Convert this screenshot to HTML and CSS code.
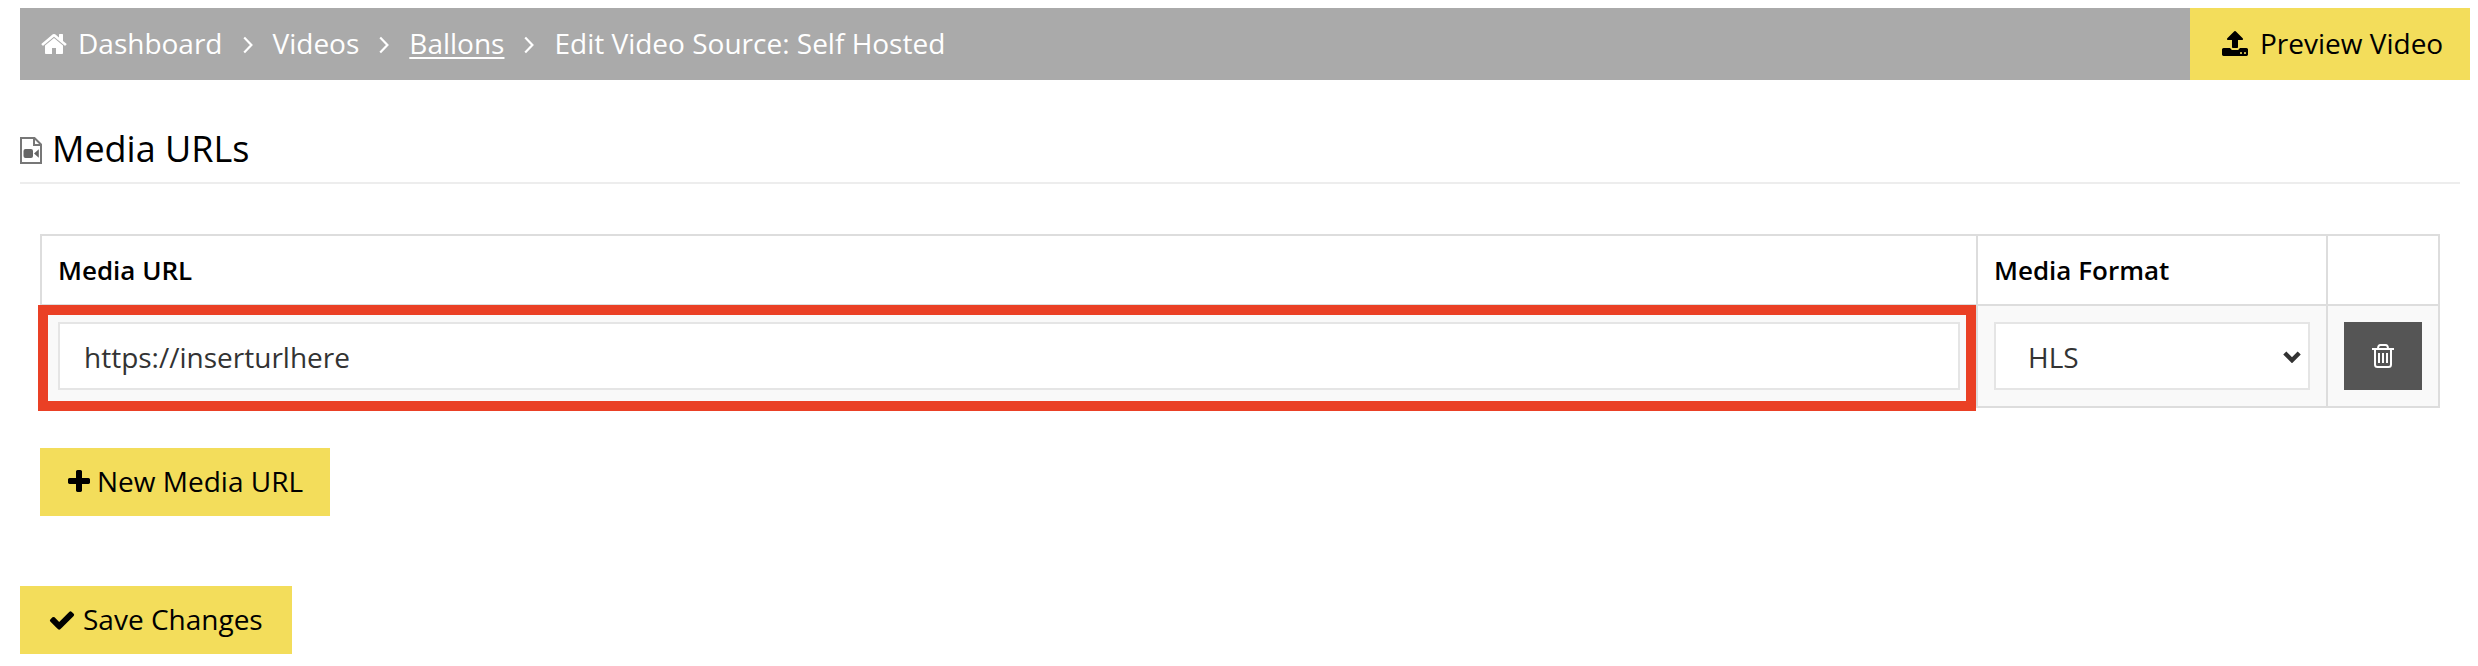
FILE: index.html
```html
<!DOCTYPE html>
<html lang="en">
<head>
    <meta charset="UTF-8">
    <meta name="viewport" content="width=device-width, initial-scale=1.0">
    <title>Edit Video Source: Self Hosted</title>
    <link rel="stylesheet" href="styles.css">
</head>
<body>
    <div id="main">
        <nav class="breadcrumb">
            <div class="crumbs">
                <svg class="icon home" viewBox="0 0 1792 1792"><path d="M1472 992v480q0 26-19 45t-45 19h-384v-384h-256v384h-384q-26 0-45-19t-19-45v-480q0-1 .5-3t.5-3l575-474 575 474q1 2 1 6zm223-69l-62 74q-8 9-21 11h-3q-13 0-21-7l-692-577-692 577q-12 8-24 7-13-2-21-11l-62-74q-8-10-7-23.5t11-21.5l719-599q32-26 76-26t76 26l244 204v-195q0-14 9-23t23-9h192q14 0 23 9t9 23v408l219 182q10 8 11 21.5t-7 23.5z"/></svg>
                <a href="#">Dashboard</a>
                <svg class="chevron" viewBox="0 0 10 18"><path d="M1.2 1.6L8.4 9l-7.2 7.4"/></svg>
                <a href="#">Videos</a>
                <svg class="chevron" viewBox="0 0 10 18"><path d="M1.2 1.6L8.4 9l-7.2 7.4"/></svg>
                <a href="#" class="current">Ballons</a>
                <svg class="chevron" viewBox="0 0 10 18"><path d="M1.2 1.6L8.4 9l-7.2 7.4"/></svg>
                <span>Edit Video Source: Self Hosted</span>
            </div>
            <a href="#" class="preview">
                <svg class="icon" viewBox="0 0 1792 1792"><path d="M1344 1472q0-26-19-45t-45-19-45 19-19 45 19 45 45 19 45-19 19-45zm256 0q0-26-19-45t-45-19-45 19-19 45 19 45 45 19 45-19 19-45zm128-224v320q0 40-28 68t-68 28h-1472q-40 0-68-28t-28-68v-320q0-40 28-68t68-28h427q21 56 70.5 92t110.5 36h256q61 0 110.5-36t70.5-92h427q40 0 68 28t28 68zm-325-648q-17 40-59 40h-256v448q0 26-19 45t-45 19h-256q-26 0-45-19t-19-45v-448h-256q-42 0-59-40-17-39 14-69l448-448q18-19 45-19t45 19l448 448q31 30 14 69z"/></svg>
                <span>Preview Video</span>
            </a>
        </nav>

        <h2>
            <svg class="file" viewBox="0 0 22 28"><path class="line" d="M1 2h13.500l6.500 6.500V27H1zM14 2v7h7"/><rect x="3.500" y="13" width="9.500" height="9" rx="2"/><path d="M14 17.500l4.800-4.200v8.400z"/></svg>
            <span>Media URLs</span>
        </h2>

        <form class="media_form">
            <table class="media_table">
                <thead>
                    <tr>
                        <th>Media URL</th>
                        <th class="format">Media Format</th>
                        <th class="action"></th>
                    </tr>
                </thead>
                <tbody>
                    <tr>
                        <td class="highlight"><input type="text" name="media_url" value="https://inserturlhere"></td>
                        <td>
                            <div class="select_box">
                                <select name="media_format">
                                    <option>HLS</option>
                                </select>
                                <svg class="arrow" viewBox="0 0 18 12"><path d="M1.8 2l7.2 7.2L16.200 2"/></svg>
                            </div>
                        </td>
                        <td>
                            <button type="button" class="delete" aria-label="Delete">
                                <svg class="trash" viewBox="0 0 22 24"><path d="M0 5h22M6 5c0-3 .8-4 2.500-4h5c1.700 0 2.500 1 2.500 4M3 5v15.500q0 2.500 2.500 2.500h11q2.500 0 2.500-2.500V5M7 9v10M11 9v10M15 9v10"/></svg>
                            </button>
                        </td>
                    </tr>
                </tbody>
            </table>

            <button type="button" class="btn new_url">
                <svg class="icon" viewBox="0 0 1792 1792"><path d="M1600 736v192q0 40-28 68t-68 28h-416v416q0 40-28 68t-68 28h-192q-40 0-68-28t-28-68v-416h-416q-40 0-68-28t-28-68v-192q0-40 28-68t68-28h416v-416q0-40 28-68t68-28h192q40 0 68 28t28 68v416h416q40 0 68 28t28 68z"/></svg>
                <span>New Media URL</span>
            </button>
            <button type="button" class="btn save">
                <svg class="icon" viewBox="0 0 1792 1792"><path d="M1671 566q0 40-28 68l-724 724-136 136q-28 28-68 28t-68-28l-136-136-362-362q-28-28-28-68t28-68l136-136q28-28 68-28t68 28l294 295 656-657q28-28 68-28t68 28l136 136q28 28 28 68z"/></svg>
                <span>Save Changes</span>
            </button>
        </form>
    </div>
</body>
</html>
```

FILE: styles.css
```css
* {
    margin: 0;
    padding: 0;
    box-sizing: border-box;
}

body {
    font-family: 'Open Sans', sans-serif;
    font-size: 28px;
    color: #000;
    background: #fff;
}

#main {
    padding: 8px 8px 0 20px;
}

a {
    color: inherit;
    text-decoration: none;
}

svg {
    display: block;
    flex: none;
}

.icon {
    width: 28px;
    height: 28px;
    fill: currentColor;
}

/* Breadcrumb bar */
.breadcrumb {
    display: flex;
    justify-content: space-between;
    height: 72px;
    line-height: 70px;
    background: #aaa;
    color: #fff;
}

.crumbs {
    display: flex;
    align-items: center;
    gap: 20px;
    padding-left: 20px;
}

.crumbs a,
.crumbs span,
.preview span,
.btn span {
    margin-top: -2px;
}

.home {
    margin-right: -10px;
}

.chevron {
    width: 10px;
    height: 18px;
    margin-top: 2px;
    fill: none;
    stroke: currentColor;
    stroke-width: 2.2;
}

.current {
    text-decoration: underline;
    text-decoration-thickness: 2px;
    text-underline-offset: 3px;
}

.preview {
    display: flex;
    align-items: center;
    gap: 11px;
    width: 280px;
    padding-left: 31px;
    background: #f3dd5b;
    color: #000;
    white-space: nowrap;
}

/* Section heading */
h2 {
    display: flex;
    align-items: center;
    gap: 10px;
    height: 104px;
    margin-right: 10px;
    padding-top: 34px;
    border-bottom: 2px solid #ededed;
    font-size: 36px;
    font-weight: 400;
}

.file {
    width: 22px;
    height: 28px;
    margin-top: 4px;
    fill: #666;
}

.file .line {
    fill: none;
    stroke: #777;
    stroke-width: 2;
}

/* Media table */
.media_form {
    display: flex;
    flex-direction: column;
    align-items: flex-start;
    padding-top: 50px;
}

.media_table {
    width: 2400px;
    margin-left: 20px;
    border-collapse: separate;
    border-spacing: 0;
    border-top: 2px solid #ddd;
    border-left: 2px solid #ddd;
    table-layout: fixed;
}

th,
td {
    padding: 16px;
    border-right: 2px solid #ddd;
    border-bottom: 2px solid #ddd;
    text-align: left;
}

th {
    height: 70px;
    padding: 0 16px;
    font-size: 26px;
    font-weight: 600;
}

td {
    height: 102px;
    background: #f9f9f9;
}

.format {
    width: 350px;
}

.action {
    width: 112px;
}

.highlight {
    position: relative;
}

/* Red frame drawn over the cell borders */
.highlight::after {
    content: "";
    position: absolute;
    top: -1px;
    left: -4px;
    right: 0;
    bottom: -5px;
    border: 10px solid #ea4025;
    pointer-events: none;
}

input,
select {
    display: block;
    width: 100%;
    height: 68px;
    border: 2px solid #e5e5e5;
    border-radius: 0;
    background: #fff;
    color: #333;
    font-family: inherit;
    font-size: 28px;
}

input {
    padding: 2px 24px 0;
}

select {
    appearance: none;
    padding: 2px 32px 0;
}

.select_box {
    position: relative;
}

.arrow {
    position: absolute;
    top: 29px;
    right: 9px;
    width: 18px;
    height: 12px;
    fill: none;
    stroke: #333;
    stroke-width: 4.4;
    pointer-events: none;
}

/* Buttons */
button {
    border: none;
    font-family: inherit;
    font-size: 28px;
    cursor: pointer;
}

.delete {
    display: flex;
    align-items: center;
    justify-content: center;
    width: 78px;
    height: 68px;
    background: #555;
}

.trash {
    width: 22px;
    height: 24px;
    fill: none;
    stroke: #fff;
    stroke-width: 2;
}

.btn {
    display: flex;
    align-items: center;
    height: 68px;
    background: #f3dd5b;
    color: #000;
    white-space: nowrap;
}

.new_url {
    gap: 4px;
    width: 290px;
    margin: 40px 0 70px 20px;
    padding-left: 25px;
}

.save {
    gap: 7px;
    width: 272px;
    padding-left: 28px;
}
```
